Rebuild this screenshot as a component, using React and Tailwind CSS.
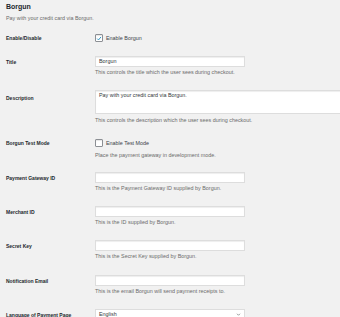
import React from 'react';

const Check = ({ checked }) => (
  <span className="w-[8px] h-[8px] shrink-0 border border-[#8c8f94] rounded-[1px] bg-white flex items-center justify-center shadow-[inset_0_1px_1px_rgba(0,0,0,0.1)]">
    {checked && (
      <svg viewBox="0 0 10 10" className="w-[7px] h-[7px]">
        <path d="M2 5.2 L4.2 7.4 L8.3 2.4" fill="none" stroke="#1e8cbe" strokeWidth="1.5" />
      </svg>
    )}
  </span>
);

const Desc = ({ children, className = '' }) => (
  <p className={`text-[5.4px] leading-[6px] text-[#6b6b6b] ${className}`}>{children}</p>
);

const Label = ({ children, className = '' }) => (
  <div className={`w-[89px] shrink-0 text-[5px] font-bold text-[#23282d] ${className}`}>{children}</div>
);

const TextRow = ({ label, value = '', desc, className = '' }) => (
  <div className={`flex ${className}`}>
    <Label className="h-[11px] leading-[12px]">{label}</Label>
    <div>
      <div className="w-[150px] h-[11px] bg-white border border-[#ddd] shadow-[inset_0_1px_1px_rgba(0,0,0,0.07)] px-[3px] text-[5.4px] leading-[9px] text-[#32373c]">
        {value}
      </div>
      <Desc className="mt-[2px]">{desc}</Desc>
    </div>
  </div>
);

export default function App() {
  return (
    <div className="w-[340px] h-[317px] overflow-hidden bg-[#f1f1f1] font-['Liberation_Sans',Arial,sans-serif] px-[6px]">
      {/* Header */}
      <h2 className="pt-[2px] text-[7px] leading-[9px] font-semibold text-[#23282d]">Borgun</h2>
      <Desc className="mt-[4px]">Pay with your credit card via Borgun.</Desc>

      {/* Enable */}
      <div className="flex mt-[13px]">
        <Label className="leading-[9px]">Enable/Disable</Label>
        <div className="flex items-center gap-[3px] h-[8px] text-[5.4px] text-[#3c434a]">
          <Check checked />
          <span>Enable Borgun</span>
        </div>
      </div>

      <TextRow className="mt-[13px]" label="Title" value="Borgun" desc="This controls the title which the user sees during checkout." />

      {/* Description */}
      <div className="flex mt-[15px]">
        <Label className="pt-[2px] leading-[12px]">Description</Label>
        <div className="flex-1 -mr-[20px]">
          <div className="h-[24px] bg-white border border-[#ddd] shadow-[inset_0_1px_1px_rgba(0,0,0,0.07)] px-[3px] py-[1px] text-[5.4px] leading-[6px] text-[#32373c]">
            Pay with your credit card via Borgun.
          </div>
          <Desc className="mt-[3px]">This controls the description which the user sees during checkout.</Desc>
        </div>
      </div>

      {/* Test mode */}
      <div className="flex mt-[16px]">
        <Label className="leading-[9px]">Borgun Test Mode</Label>
        <div>
          <div className="flex items-center gap-[3px] h-[8px] text-[5.4px] text-[#3c434a]">
            <Check />
            <span>Enable Test Mode</span>
          </div>
          <Desc className="mt-[5px]">Place the payment gateway in development mode.</Desc>
        </div>
      </div>

      <TextRow className="mt-[14px]" label="Payment Gateway ID" desc="This is the Payment Gateway ID supplied by Borgun." />
      <TextRow className="mt-[15px]" label="Merchant ID" desc="This is the ID supplied by Borgun." />
      <TextRow className="mt-[15px]" label="Secret Key" desc="This is the Secret Key supplied by Borgun." />
      <TextRow className="mt-[16px]" label="Notification Email" desc="This is the email Borgun will send payment receipts to." />

      {/* Language */}
      <div className="flex mt-[15px]">
        <Label className="h-[11px] leading-[12px]">Language of Payment Page</Label>
        <div className="w-[150px] h-[11px] bg-white border border-[#ddd] px-[3px] flex items-center justify-between text-[5.4px] text-[#32373c]">
          <span>English</span>
          <svg viewBox="0 0 10 10" className="w-[5px] h-[5px]">
            <path d="M2 3.5 L5 6.5 L8 3.5" fill="none" stroke="#555" strokeWidth="1.2" />
          </svg>
        </div>
      </div>
    </div>
  );
}
